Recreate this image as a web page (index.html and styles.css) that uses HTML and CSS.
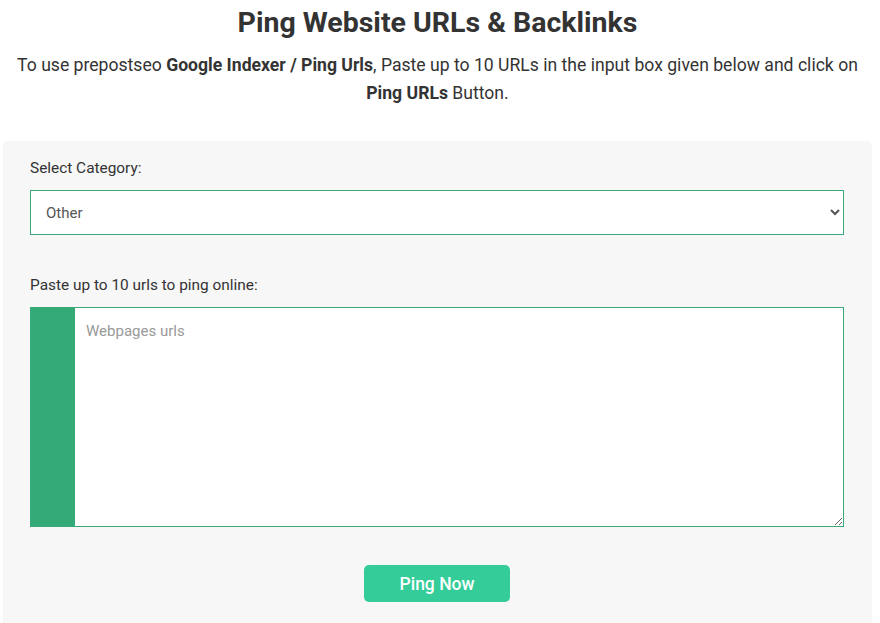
FILE: index.html
```html
<!DOCTYPE html>
<html lang="en">
<head>
  <meta charset="UTF-8">
  <title>Ping Website URLs &amp; Backlinks</title>
  <link rel="stylesheet" href="styles.css">
</head>
<body>

  <!-- Intro -->
  <div class="intro">
    <h1>Ping Website URLs &amp; Backlinks</h1>
    <p>To use prepostseo <b>Google Indexer / Ping Urls</b>, Paste up to 10 URLs in the input box given below and click on <b>Ping URLs</b> Button.</p>
  </div>

  <!-- Ping form -->
  <form class="ping-box">
    <label for="category">Select Category:</label>
    <select id="category" name="category">
      <option>Other</option>
      <option>Blog</option>
      <option>News</option>
    </select>

    <label for="urls" class="urls-label">Paste up to 10 urls to ping online:</label>
    <div class="urls-wrap">
      <div class="line-gutter"></div>
      <textarea id="urls" name="urls" placeholder="Webpages urls"></textarea>
    </div>

    <div class="actions">
      <button type="submit">Ping Now</button>
    </div>
  </form>

</body>
</html>
```

FILE: styles.css
```css
body {
  margin: 0;
  padding: 0 8px 0 3px;
  font-family: Roboto, 'Liberation Sans', sans-serif;
  background-color: #fff;
  color: #333;
}

.intro {
  text-align: center;
}

.intro h1 {
  margin: 0;
  padding-top: 6px;
  font-size: 28.5px;
  line-height: 34px;
  font-weight: 700;
  color: #333;
}

.intro p {
  margin: 11px 0 0;
  font-size: 17.6px;
  line-height: 28px;
}

.ping-box {
  margin-top: 34px;
  background-color: #f7f7f7;
  border-radius: 5px;
  padding: 18px 28px 30px 27px;
}

.ping-box label {
  display: block;
  font-size: 15.4px;
  line-height: 18px;
  color: #333;
  margin-bottom: 13px;
}

.ping-box select {
  display: block;
  width: 100%;
  height: 45px;
  padding: 0 11px;
  border: 1px solid #3aaa78;
  border-radius: 0;
  background-color: #fff;
  font-family: inherit;
  font-size: 15px;
  color: #555;
}

.urls-label {
  margin-top: 41px;
}

.urls-wrap {
  display: flex;
  box-sizing: border-box;
  height: 220px;
  border: 1px solid #3aaa78;
  background-color: #fff;
}

.line-gutter {
  width: 44px;
  background-color: #33aa78;
}

.urls-wrap textarea {
  flex: 1;
  border: none;
  outline: none;
  padding: 14px 10px 12px 11px;
  font-family: inherit;
  font-size: 15px;
  color: #333;
}

.urls-wrap textarea::placeholder {
  color: #999;
}

.actions {
  text-align: center;
  margin-top: 38px;
}

.actions button {
  width: 146px;
  height: 37px;
  background-color: #34cc98;
  border: none;
  border-radius: 5px;
  color: #fff;
  font-family: inherit;
  font-size: 17.5px;
  font-weight: 500;
  cursor: pointer;
}
```
